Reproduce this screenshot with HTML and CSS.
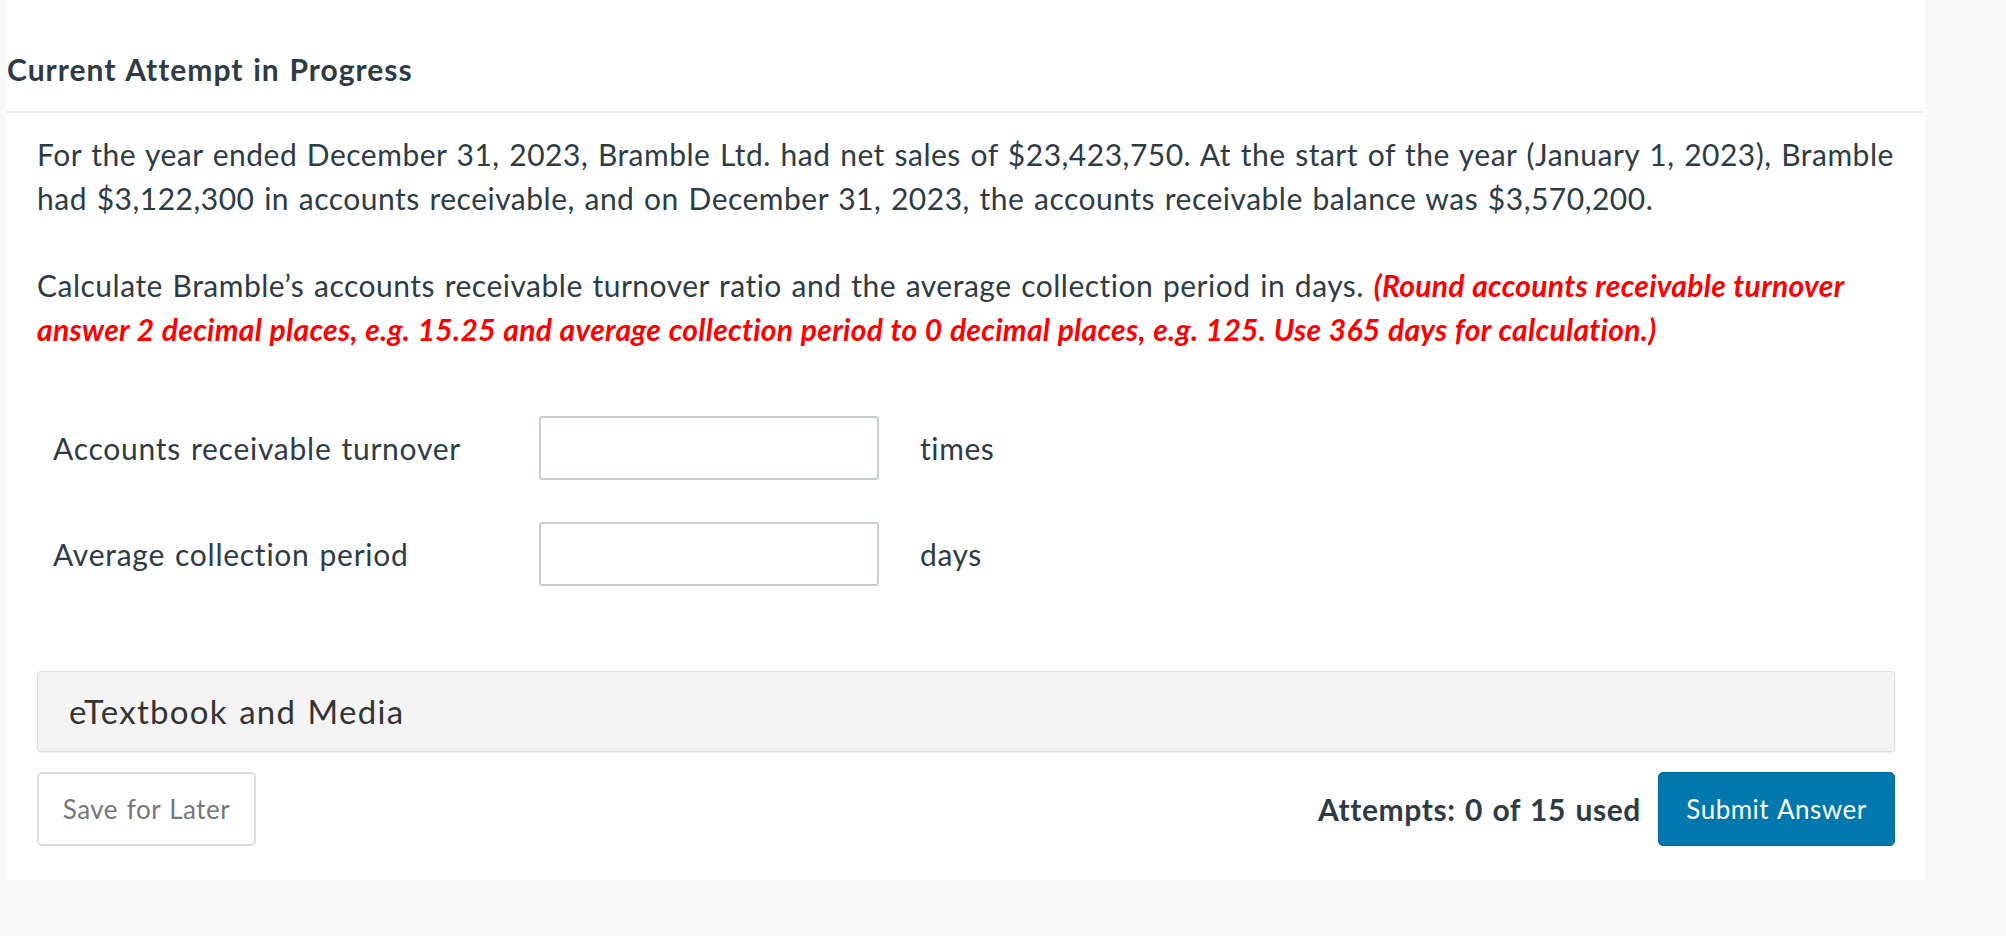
FILE: index.html
```html
<!DOCTYPE html>
<html lang="en">
<head>
<meta charset="utf-8">
<title>Current Attempt in Progress</title>
<link rel="stylesheet" href="styles.css">
</head>
<body>
<div class="page">
  <div class="panel">
    <div class="head">
      <h2 class="title">Current Attempt in Progress</h2>
    </div>
    <div class="content">
      <p class="text">For the year ended December 31, 2023, Bramble Ltd. had net sales of $23,423,750. At the start of the year (January 1, 2023), Bramble had $3,122,300 in accounts receivable, and on December 31, 2023, the accounts receivable balance was $3,570,200.</p>
      <p class="text">Calculate Bramble’s accounts receivable turnover ratio and the average collection period in days. <strong class="hint">(Round accounts receivable turnover answer 2 decimal places, e.g. 15.25 and average collection period to 0 decimal places, e.g. 125. Use 365 days for calculation.)</strong></p>
      <div class="rows">
        <div class="row">
          <span class="label">Accounts receivable turnover</span>
          <input class="field" type="text" aria-label="Accounts receivable turnover">
          <span class="unit">times</span>
        </div>
        <div class="row">
          <span class="label">Average collection period</span>
          <input class="field" type="text" aria-label="Average collection period">
          <span class="unit">days</span>
        </div>
      </div>
      <div class="media">eTextbook and Media</div>
      <div class="actions">
        <button class="btn save" type="button">Save for Later</button>
        <div class="submit-group">
          <span class="attempts">Attempts: 0 of 15 used</span>
          <button class="btn submit" type="button">Submit Answer</button>
        </div>
      </div>
    </div>
  </div>
</div>
</body>
</html>
```

FILE: styles.css
```css
html, body {
  margin: 0;
  padding: 0;
  background: #f9f9f9;
}

body {
  font-family: Lato, "Open Sans", "Liberation Sans", sans-serif;
  color: #2d3b45;
  font-size: 30px;
  letter-spacing: 0.6px;
  word-spacing: 1.5px;
}

.page {
  padding-left: 6px;
  width: 1919px;
}

.panel {
  background: #ffffff;
  padding-bottom: 34px;
}

.head {
  padding: 52px 0 25px 1px;
  border-bottom: 2px solid #ececec;
}

.title {
  margin: 0;
  font-size: 30px;
  line-height: 34px;
  font-weight: 700;
  letter-spacing: 1px;
  word-spacing: 1.5px;
  color: #2d3b45;
}

.content {
  padding: 19px 30px 0 31px;
}

.text {
  margin: 0 -26px 43px 0;
  line-height: 44px;
  letter-spacing: 0.5px;
}

.hint {
  color: #ff0000;
  font-style: italic;
  font-weight: 700;
  letter-spacing: 0.3px;
  word-spacing: 0.5px;
}

.rows {
  display: flex;
  flex-direction: column;
  gap: 42px;
  padding: 22px 0 0 16px;
}

.row {
  display: flex;
  align-items: center;
  height: 64px;
}

.label {
  width: 486px;
  line-height: 34px;
  letter-spacing: 0.75px;
}

.field {
  box-sizing: border-box;
  width: 340px;
  height: 64px;
  border: 2px solid #c9cdd1;
  border-radius: 3px;
  background: #fff;
  margin: 0;
  font: inherit;
}

.unit {
  margin-left: 41px;
  line-height: 34px;
}

.media {
  margin-top: 85px;
  background: #f4f4f4;
  border: 1px solid #dcdcdc;
  border-radius: 4px;
  box-shadow: 0 1px 2px rgba(0, 0, 0, 0.08);
  padding: 22px 31px 23px;
  font-size: 33px;
  letter-spacing: 1.3px;
  line-height: 34px;
  color: #333333;
}

.actions {
  margin-top: 20px;
  display: flex;
  justify-content: space-between;
  align-items: center;
}

.submit-group {
  display: flex;
  align-items: center;
  gap: 17px;
}

.btn {
  font-family: Lato, "Open Sans", "Liberation Sans", sans-serif;
  font-size: 26px;
  letter-spacing: 0.5px;
  word-spacing: 1.5px;
  height: 74px;
  border-radius: 5px;
  margin: 0;
  padding: 0;
  cursor: pointer;
}

.save {
  width: 219px;
  background: #ffffff;
  border: 2px solid #dddddd;
  color: #777777;
}

.submit {
  width: 237px;
  background: #0077ad;
  border: 1px solid #006999;
  color: #ffffff;
}

.attempts {
  font-weight: 700;
  line-height: 34px;
}
```
